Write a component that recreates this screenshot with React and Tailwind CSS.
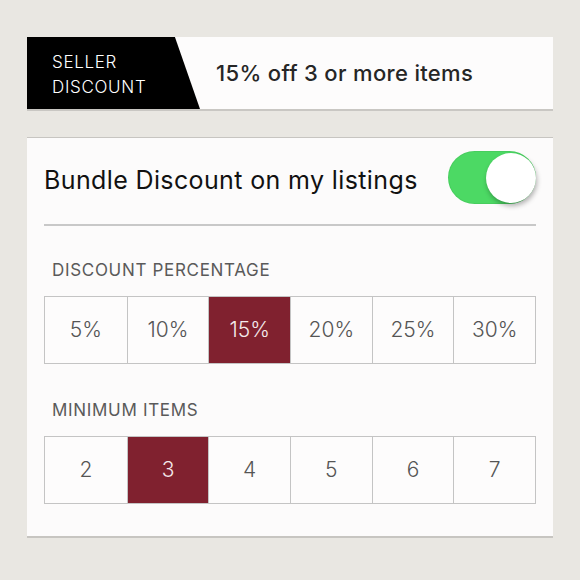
import { useState } from 'react';

const percents = ['5%', '10%', '15%', '20%', '25%', '30%'];
const minItems = ['2', '3', '4', '5', '6', '7'];

function OptionRow({ options, selected, onSelect }) {
  return (
    <div className="grid grid-cols-6 border border-[#c4c4c4] h-[68px]">
      {options.map((opt, i) => {
        const active = opt === selected;
        return (
          <button
            key={opt}
            onClick={() => onSelect(opt)}
            className={`flex items-center justify-center text-[21px] font-light ${i > 0 ? 'border-l border-[#c4c4c4]' : ''} ${
              active ? 'bg-[#80212f] text-[#f4e9eb]' : 'bg-[#fdfcfc] text-[#555]'
            }`}
          >
            {opt}
          </button>
        );
      })}
    </div>
  );
}

export default function App() {
  const [enabled, setEnabled] = useState(true);
  const [percent, setPercent] = useState('15%');
  const [items, setItems] = useState('3');

  return (
    <div className="w-[580px] h-[580px] bg-[#e9e7e2] pt-[37px] px-[27px] font-['Inter',sans-serif]">
      {/* banner */}
      <div className="flex items-stretch h-[74px] bg-[#fdfcfc] border-b-2 border-[#c9c7c3]">
        <div className="w-[173px] bg-black text-white flex flex-col justify-center pl-[25px] pt-[4px] text-[17px] font-light tracking-[0.04em] leading-[25px] [clip-path:polygon(0_0,85.5%_0,100%_100%,0_100%)]">
          <span>SELLER</span>
          <span>DISCOUNT</span>
        </div>
        <div className="flex items-center pl-[16px] text-[22px] font-medium tracking-[0.015em] text-[#262626]">
          15% off 3 or more items
        </div>
      </div>

      {/* bundle settings */}
      <div className="mt-[26px] h-[401px] bg-[#fcfbfb] border-t border-b-2 border-[#c7c5c1] px-[17px] pt-[13px]">
        <div className="flex items-center justify-between h-[53px]">
          <span className="text-[25px] tracking-[0.015em] text-[#111] pt-[6px]">Bundle Discount on my listings</span>
          <button
            onClick={() => setEnabled(!enabled)}
            className={`w-[88px] h-[53px] rounded-full flex items-center shadow-[inset_0_0_0_1px_rgba(0,0,0,0.05)] ${
              enabled ? 'bg-[#4cd964] justify-end' : 'bg-[#e5e5e5] justify-start'
            }`}
          >
            <span className="w-[50px] h-[50px] rounded-full bg-white shadow-[1px_3px_5px_rgba(0,0,0,0.3)]" />
          </button>
        </div>
        <div className="mt-[20px] h-[2px] bg-[#c8c8c8]" />

        <div className="mt-[34px] pl-[8px] text-[17px] tracking-[0.04em] text-[#5a5a5a] leading-[20px]">DISCOUNT PERCENTAGE</div>
        <div className="mt-[16px]">
          <OptionRow options={percents} selected={percent} onSelect={setPercent} />
        </div>

        <div className="mt-[36px] pl-[8px] text-[17px] tracking-[0.04em] text-[#5a5a5a] leading-[20px]">MINIMUM ITEMS</div>
        <div className="mt-[16px]">
          <OptionRow options={minItems} selected={items} onSelect={setItems} />
        </div>
      </div>
    </div>
  );
}
